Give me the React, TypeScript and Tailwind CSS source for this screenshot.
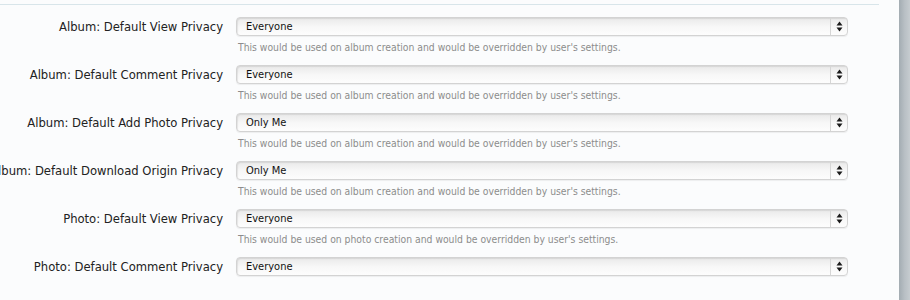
import React from "react";

const rows = [
  { label: "Album: Default View Privacy", value: "Everyone", help: "This would be used on album creation and would be overridden by user's settings." },
  { label: "Album: Default Comment Privacy", value: "Everyone", help: "This would be used on album creation and would be overridden by user's settings." },
  { label: "Album: Default Add Photo Privacy", value: "Only Me", help: "This would be used on album creation and would be overridden by user's settings." },
  { label: "Album: Default Download Origin Privacy", value: "Only Me", help: "This would be used on album creation and would be overridden by user's settings." },
  { label: "Photo: Default View Privacy", value: "Everyone", help: "This would be used on photo creation and would be overridden by user's settings." },
  { label: "Photo: Default Comment Privacy", value: "Everyone", help: "" },
];

function Arrows() {
  return (
    <svg width="7" height="11" viewBox="0 0 7 11">
      <path d="M3.5 0.5 L6.5 4.5 L0.5 4.5 Z" fill="#1a1a1a" />
      <path d="M3.5 10.5 L6.5 6.5 L0.5 6.5 Z" fill="#1a1a1a" />
    </svg>
  );
}

export default function App() {
  return (
    <div className="w-[910px] h-[300px] overflow-hidden bg-[#fbfcfd] flex" style={{ fontFamily: '"DejaVu Sans Condensed", "DejaVu Sans", sans-serif' }}>
      <div className="flex-1 flex flex-col">
        <div className="h-[4px]" />
        <div className="w-[879px] h-px bg-[#d8e5ea]" />
        <div className="flex flex-col pt-[12px] gap-[10px]">
          {rows.map((r, i) => (
            <div key={i} className="flex items-start">
              <div className="w-[223px] shrink-0 flex justify-end text-[12.9px] text-[#222] leading-[19px] whitespace-nowrap">{r.label}</div>
              <div className="ml-[13px] flex flex-col">
                <div className="w-[612px] h-[19px] rounded-[4px] border border-[#d3d3d3] bg-gradient-to-b from-[#e9e9e9] via-[#f7f7f7] to-[#fdfdfd] shadow-[inset_1px_1px_1px_rgba(0,0,0,0.08),0_1px_1px_rgba(0,0,0,0.06)] flex items-center">
                  <div className="flex-1 pl-[9px] text-[11px] text-[#111] leading-none">{r.value}</div>
                  <div className="w-[17px] h-full border-l border-[#d6d6d6] flex items-center justify-center">
                    <Arrows />
                  </div>
                </div>
                {r.help ? (
                  <div className="mt-[4px] ml-[2px] text-[10.3px] text-[#8c8c8c] leading-[15px] whitespace-nowrap">{r.help}</div>
                ) : null}
              </div>
            </div>
          ))}
        </div>
      </div>
      <div className="w-[11px] h-full bg-gradient-to-r from-[#a3acb2] via-[#b8bfc4] to-[#c6ccd0]" />
    </div>
  );
}
